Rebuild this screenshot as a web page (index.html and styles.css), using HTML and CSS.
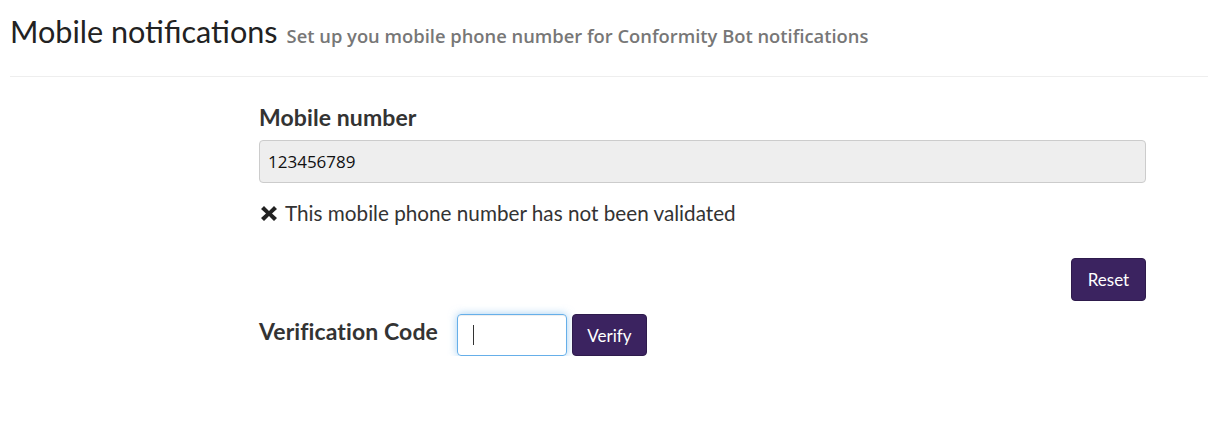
FILE: index.html
```html
<!DOCTYPE html>
<html>
<head>
<meta charset="utf-8">
<link rel="stylesheet" href="styles.css">
</head>
<body>
<div class="page">
  <div class="header">
    <h1 class="title">Mobile notifications</h1>
    <span class="subtitle">Set up you mobile phone number for Conformity Bot notifications</span>
  </div>
  <div class="form">
    <label class="label">Mobile number</label>
    <div class="input readonly">123456789</div>
    <div class="status"><svg class="x" viewBox="0 0 18 17" width="18" height="17"><path d="M1 4 L4 1 L9 6 L14 1 L17 4 L12 8.5 L17 13 L14 16 L9 11 L4 16 L1 13 L6 8.5 Z" fill="#222"/></svg><span>This mobile phone number has not been validated</span></div>
    <div class="actions"><button class="btn">Reset</button></div>
    <div class="verify-row">
      <label class="label">Verification Code</label>
      <div class="code-input"><span class="caret"></span></div>
      <button class="btn">Verify</button>
    </div>
  </div>
</div>
</body>
</html>
```

FILE: styles.css
```css
html, body { margin: 0; padding: 0; background: #fff; }
.page { padding: 0 0 0 10px; font-family: Lato, "Open Sans", sans-serif; color: #333; }
.header {
  display: flex;
  align-items: baseline;
  gap: 9px;
  height: 77px;
  box-sizing: border-box;
  padding-top: 12px;
  border-bottom: 1px solid #eee;
}
.title { margin: 0; font-family: Lato, sans-serif; font-weight: 400; font-size: 30.6px; line-height: 40px; color: #222; }
.subtitle { font-family: "Open Sans", sans-serif; font-weight: 600; font-size: 18.35px; color: #777; }
.form { margin-left: 249px; width: 887px; padding-top: 26px; }
.label { display: block; font-weight: 700; font-size: 23px; letter-spacing: 0.1px; line-height: 28px; color: #333; }
.input {
  margin-top: 9px;
  height: 43px;
  box-sizing: border-box;
  border: 1px solid #ccc;
  border-radius: 4px;
  background: #eee;
  padding: 0 8px;
  display: flex;
  align-items: center;
  font-family: "Open Sans", sans-serif;
  font-size: 17px;
  color: #111;
}
.status { margin-top: 17px; font-size: 20.7px; line-height: 26px; color: #333; padding-left: 1px; display: flex; align-items: center; gap: 7px; }
.x { flex: none; }
.actions { display: flex; justify-content: flex-end; margin-top: 32px; }
.btn {
  font-family: Lato, sans-serif;
  font-size: 17px;
  color: #fff;
  background: #3b2360;
  border: 1px solid #2e1b4c;
  border-radius: 4px;
  height: 43px;
  min-width: 75px;
  padding: 0 14px;
}
.verify-row { display: flex; align-items: flex-start; margin-top: 13px; }
.verify-row .label { margin-right: 19px; margin-top: 3px; }
.code-input {
  width: 110px; height: 42px; box-sizing: border-box;
  border: 1px solid #66afe9; border-radius: 4px;
  box-shadow: inset 0 1px 1px rgba(0,0,0,.075), 0 0 8px rgba(102,175,233,.6);
  display: flex; align-items: center; padding-left: 15px;
  margin-right: 5px;
}
.caret { width: 1px; height: 20px; background: #333; }
.verify-row .btn { height: 42px; }
```
